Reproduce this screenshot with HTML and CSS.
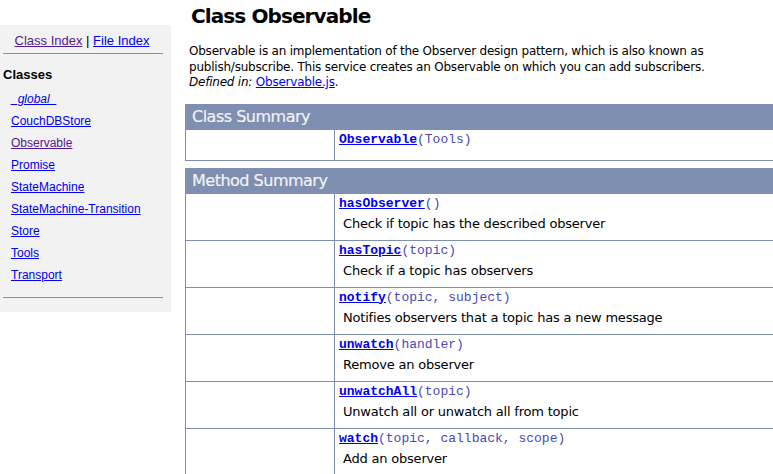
FILE: index.html
```html
<!DOCTYPE html>
<html>
<head>
<meta charset="utf-8">
<title>Class Observable</title>
<link rel="stylesheet" href="styles.css">
</head>
<body>
<div class="page">
  <div class="sidebar">
    <div class="index-links"><a class="visited" href="#">Class Index</a> | <a href="#">File Index</a></div>
    <hr class="rule">
    <h2 class="classes-title">Classes</h2>
    <ul class="class-list">
      <li><a href="#" class="global">_global_</a></li>
      <li><a href="#">CouchDBStore</a></li>
      <li><a href="#" class="visited">Observable</a></li>
      <li><a href="#">Promise</a></li>
      <li><a href="#">StateMachine</a></li>
      <li><a href="#">StateMachine-Transition</a></li>
      <li><a href="#">Store</a></li>
      <li><a href="#">Tools</a></li>
      <li><a href="#">Transport</a></li>
    </ul>
    <hr class="rule rule-bottom">
  </div>
  <div class="main">
    <h1 class="title">Class Observable</h1>
    <p class="desc">Observable is an implementation of the Observer design pattern, which is also known as publish/subscribe. This service creates an Observable on which you can add subscribers.<br><i>Defined in:</i> <a href="#">Observable.js</a>.</p>

    <table class="summary">
      <tr><th colspan="2">Class Summary</th></tr>
      <tr class="class-row">
        <td class="attrs"></td>
        <td class="name"><div class="sig"><a href="#">Observable</a>(Tools)</div></td>
      </tr>
    </table>

    <table class="summary">
      <tr><th colspan="2">Method Summary</th></tr>
      <tr>
        <td class="attrs"></td>
        <td class="name"><div class="sig"><a href="#">hasObserver</a>()</div><div class="text">Check if topic has the described observer</div></td>
      </tr>
      <tr>
        <td class="attrs"></td>
        <td class="name"><div class="sig"><a href="#">hasTopic</a>(topic)</div><div class="text">Check if a topic has observers</div></td>
      </tr>
      <tr>
        <td class="attrs"></td>
        <td class="name"><div class="sig"><a href="#">notify</a>(topic, subject)</div><div class="text">Notifies observers that a topic has a new message</div></td>
      </tr>
      <tr>
        <td class="attrs"></td>
        <td class="name"><div class="sig"><a href="#">unwatch</a>(handler)</div><div class="text">Remove an observer</div></td>
      </tr>
      <tr>
        <td class="attrs"></td>
        <td class="name"><div class="sig"><a href="#">unwatchAll</a>(topic)</div><div class="text">Unwatch all or unwatch all from topic</div></td>
      </tr>
      <tr>
        <td class="attrs"></td>
        <td class="name"><div class="sig"><a href="#">watch</a>(topic, callback, scope)</div><div class="text">Add an observer</div></td>
      </tr>
    </table>
  </div>
</div>
</body>
</html>
```

FILE: styles.css
```css
html { overflow: hidden; }
body {
  margin: 0;
  background: #ffffff;
  color: #000000;
  font-family: "DejaVu Sans", "Lucida Grande", sans-serif;
  font-size: 12px;
}
a { color: #0000ee; }
a.visited { color: #551a8b; }

.page {
  display: flex;
  align-items: flex-start;
}

.sidebar {
  flex: none;
  width: 171px;
  height: 287px;
  margin-top: 25px;
  background: #f2f2f2;
  font-family: "Liberation Sans", Arial, sans-serif;
  font-size: 12px;
  padding: 8px 0 0 0;
  box-sizing: border-box;
}
.index-links {
  text-align: center;
  font-size: 13px;
  line-height: 15px;
  padding-right: 7px;
}
.rule {
  border: 0;
  border-top: 1px solid #7f8fb1;
  margin: 5px 8px 0 3px;
  height: 0;
}
.rule-bottom { margin-top: 11px; }
.classes-title {
  font-size: 13px;
  font-weight: bold;
  margin: 13px 0 0 3px;
  line-height: 15px;
}
.class-list {
  list-style: none;
  margin: 6px 0 0 0;
  padding: 0 0 0 11px;
}
.class-list li {
  height: 22px;
  line-height: 22px;
}
.class-list a.global { font-style: italic; }

.main {
  flex: none;
  width: 640px;
  padding-left: 14px;
}
.title {
  font-size: 20px;
  letter-spacing: -0.9px;
  font-weight: bold;
  margin: 4px 0 0 6px;
  line-height: 25px;
}
.desc {
  width: 530px;
  margin: 15px 0 0 4px;
  line-height: 15.5px;
  font-size: 12px;
  letter-spacing: -0.22px;
}

.summary {
  width: 100%;
  border-collapse: collapse;
  margin-top: 13px;
  border: 1px solid #7f8fb1;
}
.summary + .summary { margin-top: 7px; }
.summary th {
  background: #7f8fb1;
  color: #f2f2f2;
  text-align: left;
  font-weight: normal;
  font-size: 16px;
  letter-spacing: -0.5px;
  height: 24px;
  padding: 0 0 0 6px;
  line-height: 24px;
  -webkit-text-stroke: 0.2px #f2f2f2;
}
.summary td {
  border: 1px solid #7f8fb1;
  vertical-align: top;
  padding: 0;
}
.summary td.attrs { width: 148px; }
.summary td.name { height: 46px; padding-left: 4px; }
.class-row td.name { height: 30px; }
.sig {
  font-family: "Liberation Mono", "Courier New", monospace;
  font-size: 13px;
  color: #4a4ab0;
  line-height: 15px;
  margin-top: 2px;
}
.sig a {
  font-weight: bold;
  color: #0000ee;
}
.text {
  margin: 5px 0 0 4px;
  font-size: 13px;
  letter-spacing: -0.2px;
  line-height: 15px;
}
```
